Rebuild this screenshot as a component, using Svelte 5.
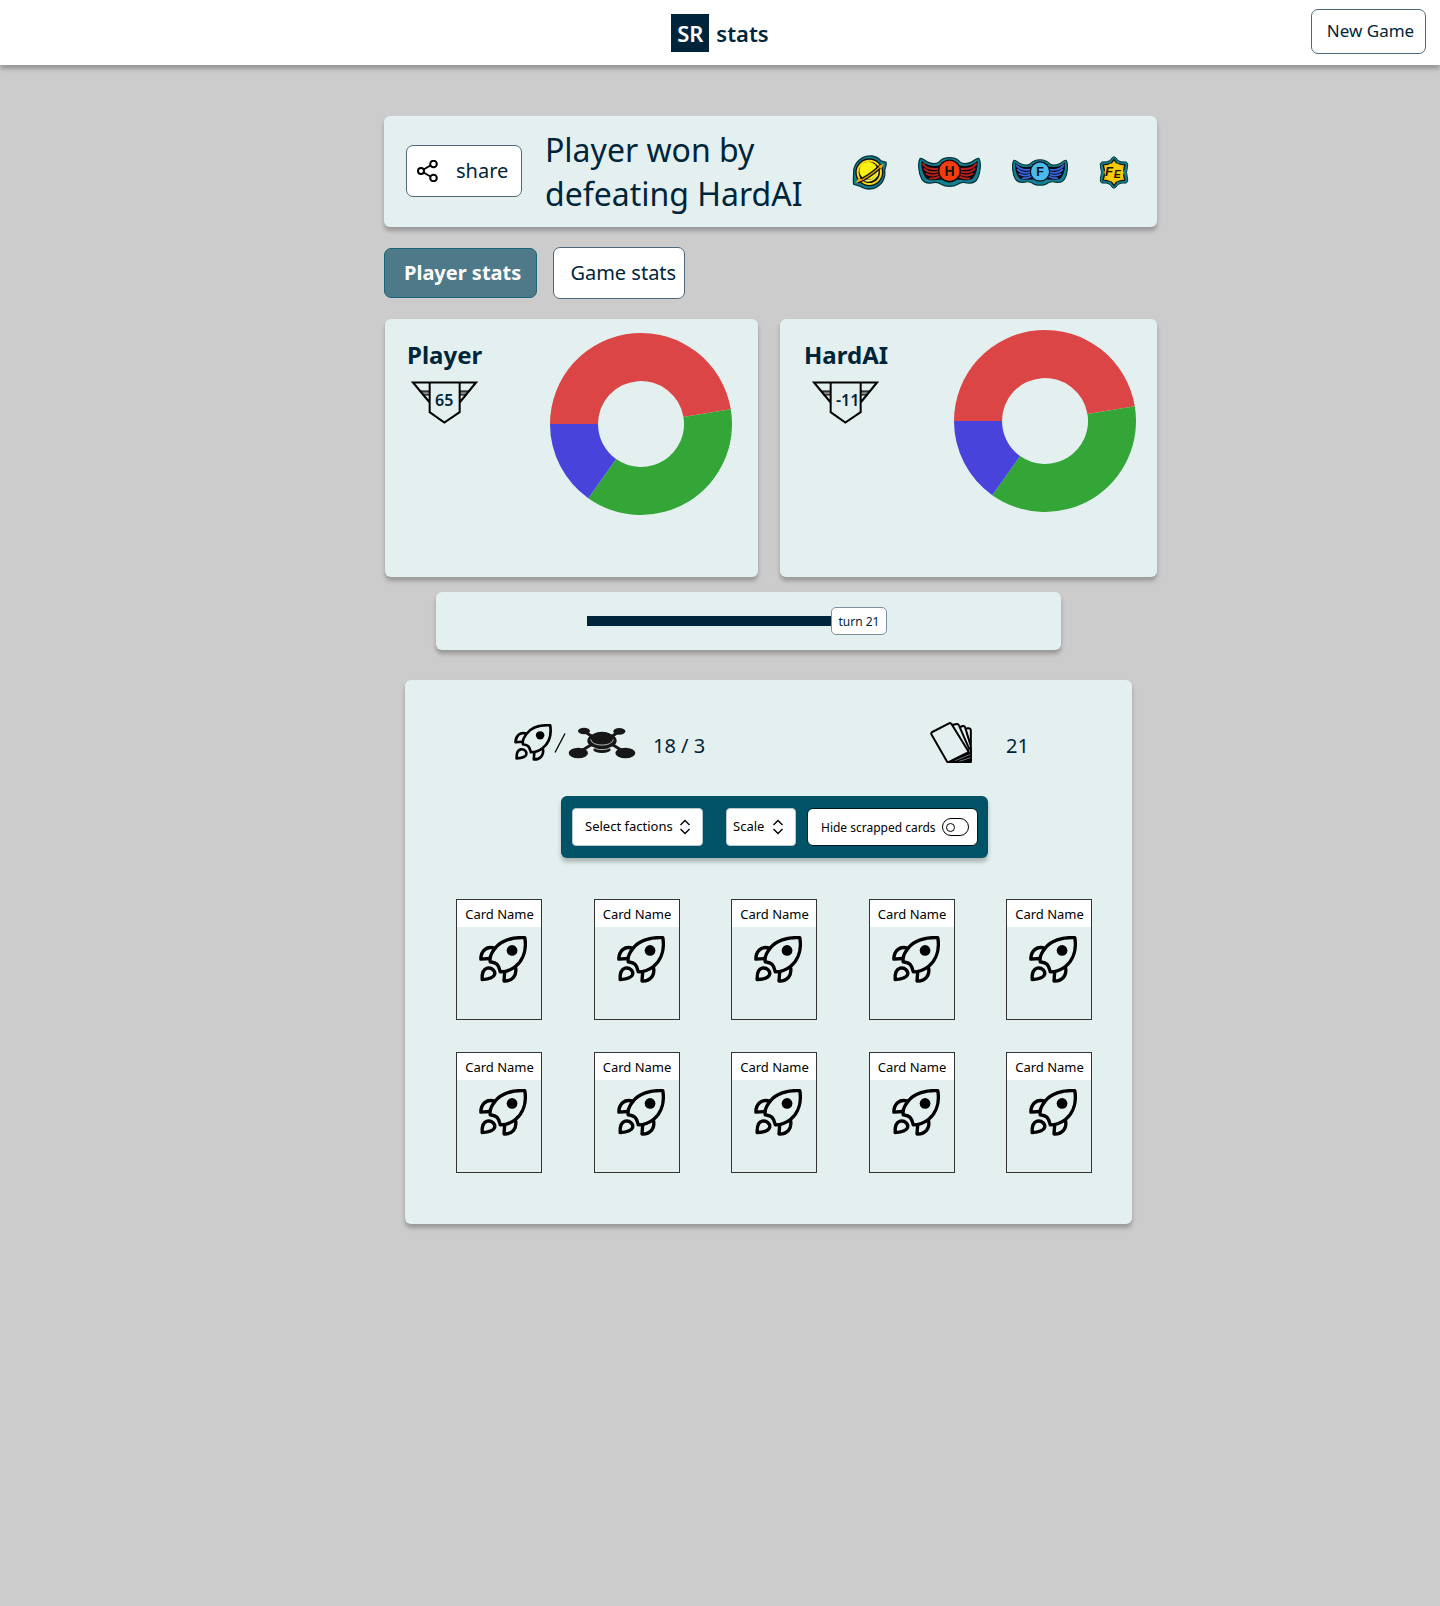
<script>
  const slices = [
    { color: '#db4545', share: 170.7 },
    { color: '#34a638', share: 134.7 },
    { color: '#4844db', share: 54.6 }
  ];
  const players = [
    { name: 'Player', score: 65, kind: 'winner' },
    { name: 'HardAI', score: -11, kind: 'loser' }
  ];
  const cards = Array.from({ length: 10 }, (_, id) => ({ id, name: 'Card Name' }));

  // Arc outlines for the donut, starting at nine o'clock and running clockwise.
  function arcs(list) {
    let angle = 180;
    return list.map(({ color, share }) => {
      const a = (angle * Math.PI) / 180;
      const b = ((angle + share) * Math.PI) / 180;
      angle += share;
      const pt = (r, t) => `${91 + r * Math.cos(t)} ${91 + r * Math.sin(t)}`;
      return {
        color,
        d: `M${pt(91, a)}A91 91 0 0 1 ${pt(91, b)}L${pt(43, b)}A43 43 0 0 0 ${pt(43, a)}Z`
      };
    });
  }
  const ring = arcs(slices);

  let turn = $state(21);
  let hidden = $state(false);
</script>

{#snippet rocket()}
  <svg class="rocket" viewBox="0 0 142 140" fill="none" stroke="#000" stroke-width="10" stroke-linejoin="round" aria-hidden="true">
    <path d="M33 77C30 62 36 50 48 36C64 14 98 3 136 5C141 36 134 70 108 91C93 103 80 107 63 107C60 98 59 90 53 84C47 78 40 78 33 77Z" />
    <path d="M47 37C22 28 5 45 5 69L32 67M76 107L74 134C98 135 114 118 108 92" />
    <path d="M9 130C8 112 12 99 24 96C38 93 49 105 46 115C43 125 28 129 9 130Z" />
    <circle cx="98" cy="43" r="16" fill="#000" stroke="none" />
  </svg>
{/snippet}

{#snippet chevrons()}
  <svg class="chevrons" viewBox="0 0 12 16" fill="none" stroke="#000" stroke-width="1.400" aria-hidden="true">
    <path d="M1.500 6L6 1.500L10.500 6M1.500 10L6 14.500L10.500 10" />
  </svg>
{/snippet}

{#snippet wings(main, feather, letter)}
  <path d="M3 2C6 1 9 5 13 7C19 10 25 11 30 7C37 -1 53 -1 60 7C65 11 71 10 77 7C81 5 84 1 87 2C91 8 89 24 85 31C82 37 76 38 70 37C63 35 61 37 57 39C50 43 40 43 33 39C29 37 27 35 20 37C14 38 8 37 5 31C1 24 -1 8 3 2Z" fill="#138090" stroke="#06343e" stroke-width="1.800" />
  <path d="M5 5C11 12 20 14 31 12L36 33C28 32 19 35 12 31C6 25 4 13 5 5ZM85 5C79 12 70 14 59 12L54 33C62 32 71 35 78 31C84 25 86 13 85 5Z" fill="#0b0a14" />
  <path d="M7 10C11 16 20 18 29 17M9 17C14 22 21 23 29 21M12 24C17 27 23 27 29 25M17 31C22 31 27 30 31 28M83 10C79 16 70 18 61 17M81 17C76 22 69 23 61 21M78 24C73 27 67 27 61 25M73 31C68 31 63 30 59 28" fill="none" stroke={feather} stroke-width="2.800" stroke-linecap="round" />
  <circle cx="45" cy="20" r="16.500" fill="#0b0a14" />
  <circle cx="45" cy="20" r="14.500" fill={main} />
  <text x="45" y="27" text-anchor="middle" class="glyph">{letter}</text>
{/snippet}

<header class="top">
  <a class="brand" href="/"><span class="mark">SR</span><span>stats</span></a>
  <button class="outlined new-game">New Game</button>
</header>

<main>
  <section class="panel banner">
    <button class="outlined share">
      <svg viewBox="0 0 21 22" fill="none" stroke="#000" stroke-width="2" aria-hidden="true">
        <circle cx="4" cy="11" r="3" /><circle cx="16.500" cy="4" r="3.300" /><circle cx="16.500" cy="18" r="3.300" />
        <path d="M6.500 9.500L13.500 5.500M6.500 12.500L13.500 16.500" />
      </svg>
      <span>share</span>
    </button>
    <h1>Player won by defeating HardAI</h1>
    <div class="factions">
      <svg class="planet" viewBox="0 0 105 105" aria-label="Planet">
        <path d="M5 52C5 20 32 1 60 3C72 5 80 9 87 18L102 22C104 32 99 38 98 46C102 78 80 101 52 102C38 102 30 98 23 93L5 88C3 76 5 66 5 52Z" fill="#138090" stroke="#06343e" stroke-width="4" />
        <circle cx="52" cy="52" r="42" fill="#111" />
        <circle cx="52" cy="52" r="35" fill="none" stroke="#f5dc12" stroke-width="6" />
        <circle cx="49" cy="47" r="27" fill="#f8f010" />
        <path d="M36 74A28 28 0 0 0 76 42" fill="none" stroke="#fff06a" stroke-width="5" />
        <path d="M16 80C34 74 66 52 88 32" fill="none" stroke="#111" stroke-width="12" />
        <path d="M16 80C34 74 66 52 88 32" fill="none" stroke="#d99a10" stroke-width="4" />
        <path d="M11 84L20 68L31 76ZM95 27L80 32L87 43Z" fill="#f5a50c" />
      </svg>
      <svg class="hero" viewBox="0 0 90 43" aria-label="H">{@render wings('#f63c0c', '#bb2018', 'H')}</svg>
      <svg class="fleet" viewBox="0 0 90 43" aria-label="F">{@render wings('#49b9f0', '#3865dc', 'F')}</svg>
      <svg class="frontier" viewBox="0 0 90 100" aria-label="FE">
        <path d="M45 2Q52 4 57 14Q68 20 82 18Q89 22 86 33Q80 50 86 67Q89 78 82 82Q68 80 57 86Q52 96 45 98Q38 96 33 86Q22 80 8 82Q1 78 4 67Q10 50 4 33Q1 22 8 18Q22 20 33 14Q38 4 45 2Z" fill="#138090" stroke="#06343e" stroke-width="3" />
        <path d="M45 10L54 23L78 27L72 50L78 73L54 77L45 90L36 77L12 73L18 50L12 27L36 23Z" fill="#f6bd08" stroke="#171308" stroke-width="4" />
        <circle cx="45" cy="50" r="29" fill="#fbca08" />
        <text x="18" y="62" class="monogram">F</text>
        <text x="44" y="68" class="monogram small">E</text>
      </svg>
    </div>
  </section>

  <nav class="tabs">
    <button class="tab active">Player stats</button>
    <button class="outlined tab">Game stats</button>
  </nav>

  <div class="players">
    {#each players as player (player.name)}
      <section class="panel player {player.kind}">
        <div>
          <h2>{player.name}</h2>
          <div class="score">
            <svg viewBox="0 0 201 128" fill="none" stroke="#000" stroke-width="6" aria-hidden="true">
              <path d="M30 35H56M145 35H171" stroke="#777" />
              <path d="M56 4V93L100 124L146 93V4M56 64L6 4H195L146 64" />
              <path d="M26 30H56M34 41H56M146 30H175M146 41H167" stroke-width="4" />
            </svg>
            <span>{player.score}</span>
          </div>
        </div>
        <svg class="donut" viewBox="0 0 182 182" aria-label="Faction share">
          {#each ring as arc (arc.color)}<path d={arc.d} fill={arc.color} />{/each}
        </svg>
      </section>
    {/each}
  </div>

  <section class="panel timeline">
    <div class="slider">
      <input type="range" min="0" max="21" bind:value={turn} aria-label="Turn" />
      <output style:--done={turn / 21}>turn {turn}</output>
    </div>
  </section>

  <section class="panel deck">
    <div class="totals">
      {@render rocket()}
      <svg class="slash" viewBox="0 0 12 20" stroke="#000" stroke-width="1.300" aria-hidden="true"><path d="M1 19.500L11 .5" /></svg>
      <svg class="drone" viewBox="0 0 204 96" fill="#171717" aria-hidden="true">
        <path d="M48 13L76 31M154 13L128 31M31 77L72 52M172 77L132 52" stroke="#171717" stroke-width="9" />
        <ellipse cx="48" cy="12" rx="18" ry="10" /><ellipse cx="154" cy="13" rx="18" ry="10" />
        <ellipse cx="31" cy="78" rx="29" ry="16" /><ellipse cx="172" cy="78" rx="30" ry="16" />
        <ellipse cx="102" cy="68" rx="26" ry="10" />
        <ellipse cx="102" cy="41" rx="44" ry="25" />
        <path d="M68 37C70 60 134 60 136 37M74 61C86 70 118 70 130 61" fill="none" stroke="#ccd6d6" stroke-width="2.500" />
        <ellipse cx="102" cy="32" rx="31" ry="18" />
      </svg>
      <span class="count">18 / 3</span>
      <svg class="hand" viewBox="0 0 126 124" fill="none" stroke="#000" stroke-width="6" stroke-linejoin="round" aria-hidden="true">
        <path d="M115 92L56 121H123V80Z" fill="#000" />
        <path d="M66 9L80 6Q85 5 87 10L121 88M90 15L99 12Q104 11 106 17L122 70M107 20L114 19Q122 18 123 25V121" />
        <path d="M5 31L57 4Q62 2 65 7L115 88Q116 91 113 93L57 121Q53 123 50 118L4 38Q2 34 5 31Z" fill="#e3f0ef" />
        <path d="M76 117L121 98M88 119L122 108M119 84V92" stroke="#e3f0ef" stroke-width="1.500" />
      </svg>
      <span class="count">21</span>
    </div>

    <div class="toolbar">
      <label class="picker factions-picker">
        <select aria-label="Select factions"><option>Select factions</option></select>
        {@render chevrons()}
      </label>
      <label class="picker scale-picker">
        <select aria-label="Scale"><option>Scale</option></select>
        {@render chevrons()}
      </label>
      <label class="toggle">
        <span>Hide scrapped cards</span>
        <input type="checkbox" bind:checked={hidden} />
      </label>
    </div>

    <div class="cards">
      {#each cards as card (card.id)}
        <article class="card">
          <h3>{card.name}</h3>
          {@render rocket()}
        </article>
      {/each}
    </div>
  </section>
</main>

<style>
  :global(body) {
    background: #ccc;
    color: #00253a;
    font-family: "Noto Sans", sans-serif;
  }
  :global(*), :global(*::before) { box-sizing: border-box; }
  svg { display: block; flex: none; }
  h1, h2, h3 { margin: 0; }
  button, select, input {
    margin: 0;
    font: inherit;
    color: inherit;
  }
  button { cursor: pointer; }

  .top {
    display: grid;
    grid-template-columns: 1fr auto 1fr;
    align-items: center;
    padding: 9px 14px 11px;
    background: #fff;
    box-shadow: 0 4px 4px rgba(0, 0, 0, 0.25);
  }
  .brand {
    grid-column: 2;
    display: flex;
    align-items: center;
    gap: 7px;
    padding-top: 2px;
    color: inherit;
    text-decoration: none;
    font-size: 22px;
    font-weight: 600;
    line-height: 38px;
  }
  .mark {
    width: 38px;
    background: #00253a;
    color: #fff;
    text-align: center;
  }
  .outlined {
    background: #fff;
    border: 1px solid #4e687a;
    border-radius: 7px;
  }
  .new-game {
    justify-self: end;
    width: 115px;
    height: 45px;
    padding: 0 0 2px 4px;
    font-size: 17px;
  }

  main {
    max-width: 874px;
    margin: 0 auto;
    padding: 51px 0 60px 101px;
  }
  .panel {
    background: #e3f0ef;
    border-radius: 6px;
    box-shadow: 0 4px 4px rgba(0, 0, 0, 0.25);
  }

  .banner {
    display: flex;
    align-items: center;
    padding: 12px 28px 11px 22px;
  }
  .share {
    display: flex;
    align-items: center;
    gap: 18px;
    flex: none;
    width: 116px;
    height: 52px;
    margin-bottom: 2px;
    padding: 0 0 0 10px;
    font-size: 20px;
  }
  .share svg { width: 21px; height: 22px; }
  .share span { padding-bottom: 2px; }
  h1 {
    flex: 1;
    margin-left: 23px;
    font-size: 32px;
    font-weight: 400;
    line-height: 44px;
  }
  .factions { display: flex; align-items: center; gap: 31px; }
  .planet { width: 35px; height: 35px; }
  .hero { width: 63px; height: 30px; }
  .fleet { width: 56px; height: 27px; }
  .frontier { width: 30px; height: 33px; }
  .glyph { font: 700 20px "Liberation Sans", sans-serif; fill: #111; }
  .monogram { font: italic 700 40px "Liberation Sans", sans-serif; fill: #171308; }
  .small { font-size: 32px; }

  .tabs { display: flex; align-items: center; gap: 16px; margin-top: 20px; }
  .tab {
    min-width: 132px;
    height: 52px;
    padding: 0 8px 2px 16px;
    font-size: 20px;
    white-space: nowrap;
  }
  .active {
    height: 50px;
    padding: 0 15px 2px 19px;
    background: #4e7989;
    border: 1px solid #1c6478;
    border-radius: 7px;
    color: #fff;
    font-weight: 700;
  }

  .players {
    display: grid;
    grid-template-columns: 373fr 377fr;
    gap: 22px;
    margin: 20px 0 0 1px;
  }
  .player { display: flex; justify-content: space-between; min-height: 258px; }
  .winner { padding: 14px 26px 0 22px; }
  .loser { padding: 11px 21px 0 24px; }
  h2 { font-size: 24px; font-weight: 700; line-height: 32px; }
  .winner h2 { margin-top: 6px; }
  .loser h2 { margin-top: 9px; }
  .score { display: grid; align-items: center; width: 67px; margin: 10px 0 0 4px; }
  .loser .score { margin-left: 8px; }
  .score svg, .score span { grid-area: 1 / 1; }
  .score svg { width: 67px; height: 43px; }
  .score span { padding: 0 0 5px 24px; font-size: 16px; font-weight: 600; line-height: 20px; }
  .donut { width: 182px; height: 182px; }

  .timeline {
    display: flex;
    justify-content: center;
    margin: 15px 96px 0 52px;
    padding: 15px 23px 15px 0;
  }
  .slider { position: relative; width: 300px; height: 28px; }
  .slider input {
    display: block;
    appearance: none;
    width: 100%;
    height: 28px;
    background: linear-gradient(#00253a, #00253a) center / 100% 10px no-repeat;
  }
  .slider input::-webkit-slider-thumb {
    appearance: none;
    width: 56px;
    height: 28px;
    background: #fff;
    border: 1px solid #7d919d;
    border-radius: 5px;
  }
  output {
    position: absolute;
    top: 0;
    left: calc((100% - 56px) * var(--done));
    width: 56px;
    font-size: 12px;
    line-height: 30px;
    text-align: center;
    pointer-events: none;
  }

  .deck { margin: 30px 25px 0 21px; padding: 42px 40px 51px 51px; }
  .totals { display: flex; align-items: center; height: 41px; padding-left: 58px; }
  .totals .rocket { width: 38px; height: 37px; }
  .slash { width: 12px; height: 20px; margin: 0 2px; }
  .drone { width: 68px; height: 32px; }
  .count { padding-top: 6px; font-size: 20px; line-height: 28px; margin-left: 17px; }
  .hand { width: 42px; height: 41px; margin-left: auto; }
  .hand + .count { width: 86px; margin-left: 34px; }

  .toolbar {
    display: flex;
    align-items: center;
    width: fit-content;
    margin: 33px 0 0 105px;
    padding: 12px 10px 12px 11px;
    background: #005266;
    border-radius: 6px;
    box-shadow: 0 4px 4px rgba(0, 0, 0, 0.25);
    color: #000;
    font-size: 13px;
  }
  .picker { display: grid; align-items: center; }
  .picker select {
    grid-area: 1 / 1;
    appearance: none;
    height: 38px;
    background: #fff;
    border: 1px solid #b8c9ce;
    border-radius: 4px;
  }
  .factions-picker select { width: 131px; padding: 0 0 2px 12px; }
  .scale-picker { margin: 0 11px 0 23px; }
  .scale-picker select { width: 70px; padding: 0 0 2px 6px; }
  .chevrons { grid-area: 1 / 1; justify-self: end; width: 12px; height: 16px; margin-right: 12px; pointer-events: none; }
  .toggle {
    display: flex;
    align-items: center;
    gap: 6px;
    height: 38px;
    padding: 0 8px 0 13px;
    background: #fff;
    border: 1px solid #001a22;
    border-radius: 6px;
    font-size: 12px;
  }
  .toggle span { white-space: nowrap; }
  .toggle input {
    appearance: none;
    display: flex;
    align-items: center;
    width: 27px;
    height: 18px;
    padding: 0 3px;
    border: 1px solid #000;
    border-radius: 9px;
  }
  .toggle input::before {
    content: "";
    width: 9px;
    height: 9px;
    border: 1px solid #000;
    border-radius: 50%;
  }
  .toggle input:checked { justify-content: flex-end; }

  .cards {
    display: grid;
    grid-template-columns: repeat(5, 86px);
    justify-content: space-between;
    row-gap: 32px;
    margin-top: 41px;
  }
  .card { height: 121px; border: 1px solid #333; color: #000; }
  h3 {
    padding: 1px 0 0 1px;
    background: #fff;
    font-size: 13px;
    font-weight: 400;
    line-height: 26px;
    text-align: center;
  }
  .card .rocket { width: 48px; height: 47px; margin: 9px 0 0 22px; }
</style>
